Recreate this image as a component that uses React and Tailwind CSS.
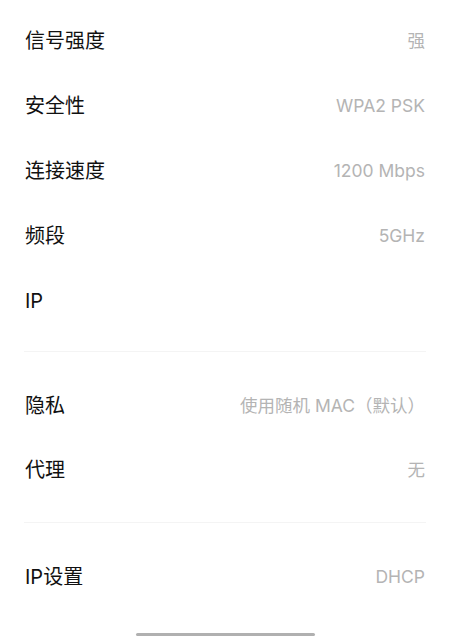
import React from 'react';

const rowsTop = [
    { label: '信号强度', value: '强' },
    { label: '安全性', value: 'WPA2 PSK' },
    { label: '连接速度', value: '1200 Mbps' },
    { label: '频段', value: '5GHz' },
    { label: 'IP', value: '' },
];

const rowsMid = [
    { label: '隐私', value: '使用随机 MAC（默认）' },
    { label: '代理', value: '无' },
];

const Row = ({ label, value, h = 'h-[65px]' }) => (
    <div className={`flex items-center justify-between ${h}`}>
        <span className="text-[20px] text-[#111111]">{label}</span>
        <span className="text-[17.5px] text-[#b4b4b4]">{value}</span>
    </div>
);

const App = () => {
    return (
        <div
            className="w-[450px] h-[638px] bg-white relative overflow-hidden leading-none"
            style={{ fontFamily: 'Inter, "Noto Sans CJK SC", sans-serif' }}
        >
            <div className="px-[25px] pt-[8px]">
                {rowsTop.map((r) => (
                    <Row key={r.label} {...r} />
                ))}
            </div>

            <div className="mx-[24px] mt-[18px] h-px bg-[#f4f4f4]" />

            <div className="px-[25px] pt-[22px]">
                {rowsMid.map((r) => (
                    <Row key={r.label} {...r} h="h-[64px]" />
                ))}
            </div>

            <div className="mx-[24px] mt-[20px] h-px bg-[#f4f4f4]" />

            <div className="px-[25px] pt-[22px]">
                <Row label="IP设置" value="DHCP" h="h-[64px]" />
            </div>

            {/* Home indicator */}
            <div className="absolute bottom-[2px] left-[136px] w-[179px] h-[3px] rounded-full bg-[#b0b0b0]" />
        </div>
    );
};

export default App;
